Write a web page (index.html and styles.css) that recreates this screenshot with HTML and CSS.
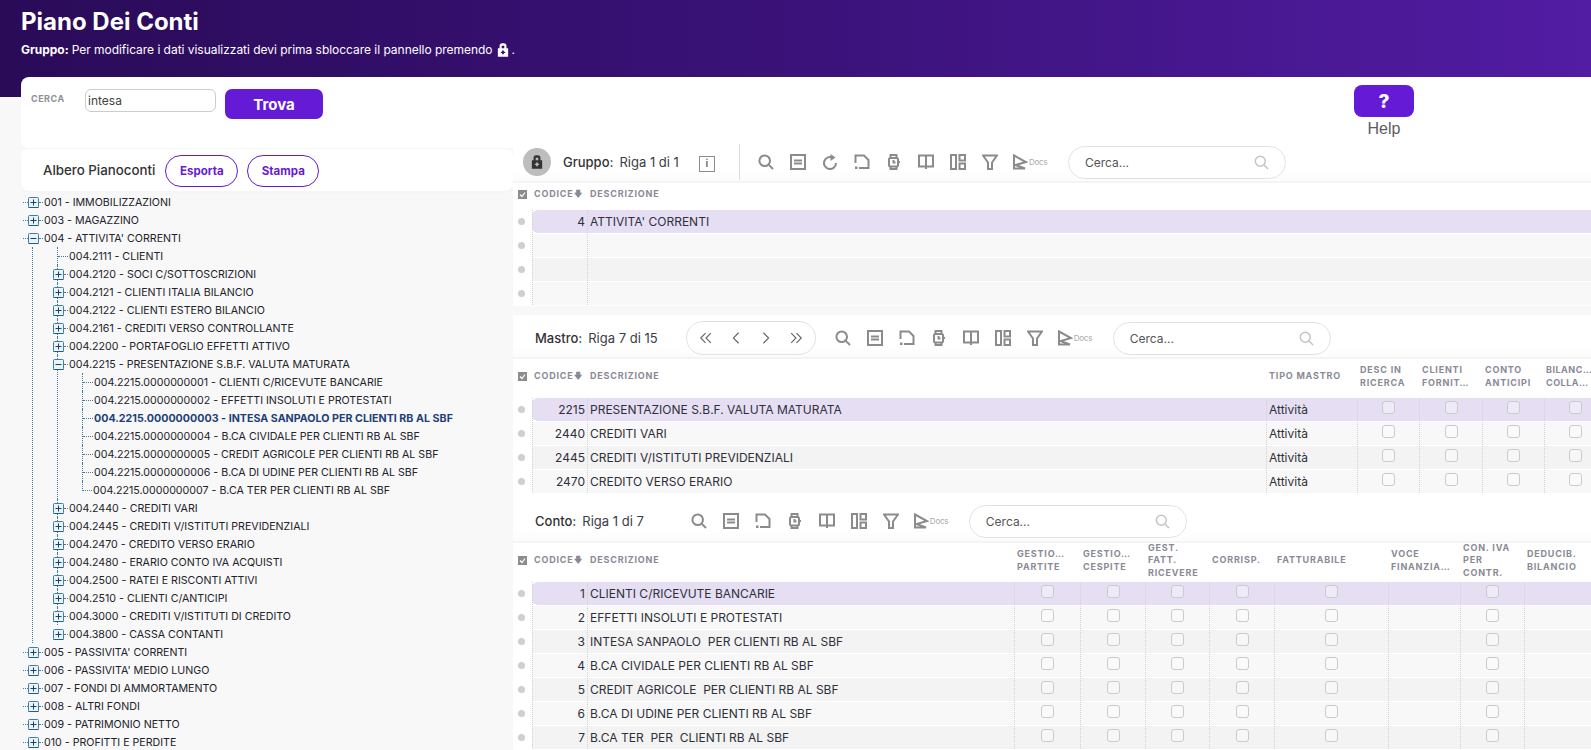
FILE: index.html
```html
<!DOCTYPE html>
<html lang="it">
<head>
<meta charset="utf-8">
<title>Piano Dei Conti</title>
<link rel="stylesheet" href="styles.css">
</head>
<body>
<svg class="defs" aria-hidden="true">
  <symbol id="i-search" viewBox="0 0 16 16"><circle cx="6.7" cy="6.7" r="5.3"/><path d="M10.6 10.6l4.4 4.4"/></symbol>
  <symbol id="i-doc" viewBox="0 0 16 16"><rect x="1" y="1" width="14" height="14"/><path d="M4 6.500h8M4 9.500h8" /></symbol>
  <symbol id="i-refresh" viewBox="0 0 16 16"><path d="M10.500 3.600A6 6 0 1 0 14 9"/><path class="solid" d="M8.500 0v7l5-3.500z"/></symbol>
  <symbol id="i-file" viewBox="0 0 16 16"><path d="M1.500 9V1.500h8.500l4.500 4.500v8H5"/><path class="solid" d="M1 12.500h2.500V15H1z"/></symbol>
  <symbol id="i-watch" viewBox="0 0 16 16"><rect x="3" y="4" width="9" height="8.500" rx="1.500"/><path d="M4.500 4V1h6v3M4.500 12.500V15h6v-2.500M7.500 6v2.500h2M12 8h2"/></symbol>
  <symbol id="i-book" viewBox="0 0 16 16"><path d="M1 1.500h14v11H1zM8 1.500V15"/></symbol>
  <symbol id="i-layout" viewBox="0 0 16 16"><rect x="1" y="1" width="5" height="14"/><rect x="9.500" y="1" width="5.500" height="5.500"/><rect x="9.500" y="9.500" width="5.500" height="5.500"/></symbol>
  <symbol id="i-filter" viewBox="0 0 16 16"><path d="M1 1.500h14L10 8.500V15H6V8.500z"/></symbol>
  <symbol id="i-docs" viewBox="0 0 16 16"><path d="M2 1.500L14 8 3.500 11 13 14.500H2z"/></symbol>
  <symbol id="i-lock" viewBox="0 0 14 16"><path fill-rule="evenodd" d="M3 6V3a3 3 0 0 1 3-3h2a3 3 0 0 1 3 3v3h2v10H1V6zM5.500 6h3V3h-3zM6 8.500v1.500H4.500v1.500H6V13h2v-1.500h1.500V10H8V8.500z"/></symbol>
  <symbol id="i-first" viewBox="0 0 16 16"><path d="M7.500 2.500L2 8l5.500 5.500M13.500 2.500L8 8l5.500 5.500"/></symbol>
  <symbol id="i-prev" viewBox="0 0 16 16"><path d="M11 2L5 8l6 6"/></symbol>
  <symbol id="i-next" viewBox="0 0 16 16"><path d="M5 2l6 6-6 6"/></symbol>
  <symbol id="i-last" viewBox="0 0 16 16"><path d="M2.500 2.500L8 8l-5.500 5.500M8.500 2.500L14 8l-5.500 5.500"/></symbol>
  <symbol id="i-plus" viewBox="0 0 11 11"><rect x=".5" y=".5" width="10" height="10" rx="1" fill="#eaf3f8" stroke="#3b7ea8"/><path d="M.5 10.500h10" stroke="#1f5f8b" fill="none"/><path d="M2.500 5.500h6M5.500 2.500v6" stroke="#1d3f63" fill="none"/></symbol>
  <symbol id="i-minus" viewBox="0 0 11 11"><rect x=".5" y=".5" width="10" height="10" rx="1" fill="#eaf3f8" stroke="#3b7ea8"/><path d="M.5 10.500h10" stroke="#1f5f8b" fill="none"/><path d="M2.500 5.500h6" stroke="#1d3f63" fill="none"/></symbol>
  <symbol id="i-all" viewBox="0 0 9 9"><rect width="9" height="9" fill="#8c8c8c"/><path d="M2 4.500l2 2 3-4" fill="none" stroke="#fff" stroke-width="1.200"/></symbol>
</svg>

<header class="hero">
  <h1 class="hero-title">Piano Dei Conti</h1>
  <p class="hero-note"><b>Gruppo:</b> Per modificare i dati visualizzati devi prima sbloccare il pannello premendo <svg class="note-lock"><use href="#i-lock"/></svg> .</p>
</header>

<section class="search-card">
  <label class="search-label" for="q">CERCA</label>
  <input class="search-input" id="q" type="text" value="intesa">
  <button class="btn-find" type="button">Trova</button>
  <div class="help">
    <button class="btn-help" type="button">?</button>
    <span class="help-text">Help</span>
  </div>
</section>

<main class="main">
  <aside class="left">
    <div class="tree-head">
      <span class="tree-title">Albero Pianoconti</span>
      <button class="pill pill-a" type="button">Esporta</button>
      <button class="pill pill-b" type="button">Stampa</button>
    </div>
    <ul class="tree">
      <li class="n1"><i class="t5"></i><svg class="box"><use href="#i-plus"/></svg><i class="t5"></i><span>001 - IMMOBILIZZAZIONI</span></li>
      <li class="n1"><i class="t5"></i><svg class="box"><use href="#i-plus"/></svg><i class="t5"></i><span>003 - MAGAZZINO</span></li>
      <li class="n1"><i class="t5"></i><svg class="box"><use href="#i-minus"/></svg><i class="t5"></i><span>004 - ATTIVITA' CORRENTI</span></li>
      <li class="branch">
        <ul class="l2">
          <li><div class="n2"><i class="t10"></i><span>004.2111 - CLIENTI</span></div></li>
          <li><div class="n2"><svg class="box box-on"><use href="#i-plus"/></svg><i class="t5"></i><span>004.2120 - SOCI C/SOTTOSCRIZIONI</span></div></li>
          <li><div class="n2"><svg class="box box-on"><use href="#i-plus"/></svg><i class="t5"></i><span>004.2121 - CLIENTI ITALIA BILANCIO</span></div></li>
          <li><div class="n2"><svg class="box box-on"><use href="#i-plus"/></svg><i class="t5"></i><span>004.2122 - CLIENTI ESTERO BILANCIO</span></div></li>
          <li><div class="n2"><svg class="box box-on"><use href="#i-plus"/></svg><i class="t5"></i><span>004.2161 - CREDITI VERSO CONTROLLANTE</span></div></li>
          <li><div class="n2"><svg class="box box-on"><use href="#i-plus"/></svg><i class="t5"></i><span>004.2200 - PORTAFOGLIO EFFETTI ATTIVO</span></div></li>
          <li><div class="n2"><svg class="box box-on"><use href="#i-minus"/></svg><i class="t5"></i><span>004.2215 - PRESENTAZIONE S.B.F. VALUTA MATURATA</span></div>
            <ul class="l3">
              <li class="n3"><i class="t10"></i><span>004.2215.0000000001 - CLIENTI C/RICEVUTE BANCARIE</span></li>
              <li class="n3"><i class="t10"></i><span>004.2215.0000000002 - EFFETTI INSOLUTI E PROTESTATI</span></li>
              <li class="n3 hit"><i class="t10"></i><span>004.2215.0000000003 - INTESA SANPAOLO PER CLIENTI RB AL SBF</span></li>
              <li class="n3"><i class="t10"></i><span>004.2215.0000000004 - B.CA CIVIDALE PER CLIENTI RB AL SBF</span></li>
              <li class="n3"><i class="t10"></i><span>004.2215.0000000005 - CREDIT AGRICOLE PER CLIENTI RB AL SBF</span></li>
              <li class="n3"><i class="t10"></i><span>004.2215.0000000006 - B.CA DI UDINE PER CLIENTI RB AL SBF</span></li>
              <li class="n3 end"><i class="elbow"></i><span>004.2215.0000000007 - B.CA TER PER CLIENTI RB AL SBF</span></li>
            </ul>
          </li>
          <li><div class="n2"><svg class="box box-on"><use href="#i-plus"/></svg><i class="t5"></i><span>004.2440 - CREDITI VARI</span></div></li>
          <li><div class="n2"><svg class="box box-on"><use href="#i-plus"/></svg><i class="t5"></i><span>004.2445 - CREDITI V/ISTITUTI PREVIDENZIALI</span></div></li>
          <li><div class="n2"><svg class="box box-on"><use href="#i-plus"/></svg><i class="t5"></i><span>004.2470 - CREDITO VERSO ERARIO</span></div></li>
          <li><div class="n2"><svg class="box box-on"><use href="#i-plus"/></svg><i class="t5"></i><span>004.2480 - ERARIO CONTO IVA ACQUISTI</span></div></li>
          <li><div class="n2"><svg class="box box-on"><use href="#i-plus"/></svg><i class="t5"></i><span>004.2500 - RATEI E RISCONTI ATTIVI</span></div></li>
          <li><div class="n2"><svg class="box box-on"><use href="#i-plus"/></svg><i class="t5"></i><span>004.2510 - CLIENTI C/ANTICIPI</span></div></li>
          <li><div class="n2"><svg class="box box-on"><use href="#i-plus"/></svg><i class="t5"></i><span>004.3000 - CREDITI V/ISTITUTI DI CREDITO</span></div></li>
          <li class="l2-end"><div class="n2"><svg class="box box-on"><use href="#i-plus"/></svg><i class="t5"></i><span>004.3800 - CASSA CONTANTI</span></div></li>
        </ul>
      </li>
      <li class="n1"><i class="t5"></i><svg class="box"><use href="#i-plus"/></svg><i class="t5"></i><span>005 - PASSIVITA' CORRENTI</span></li>
      <li class="n1"><i class="t5"></i><svg class="box"><use href="#i-plus"/></svg><i class="t5"></i><span>006 - PASSIVITA' MEDIO LUNGO</span></li>
      <li class="n1"><i class="t5"></i><svg class="box"><use href="#i-plus"/></svg><i class="t5"></i><span>007 - FONDI DI AMMORTAMENTO</span></li>
      <li class="n1"><i class="t5"></i><svg class="box"><use href="#i-plus"/></svg><i class="t5"></i><span>008 - ALTRI FONDI</span></li>
      <li class="n1"><i class="t5"></i><svg class="box"><use href="#i-plus"/></svg><i class="t5"></i><span>009 - PATRIMONIO NETTO</span></li>
      <li class="n1"><i class="t5"></i><svg class="box"><use href="#i-plus"/></svg><i class="t5"></i><span>010 - PROFITTI E PERDITE</span></li>
    </ul>
  </aside>

  <div class="right">
    <!-- GRUPPO -->
    <section class="panel panel-gruppo">
      <div class="bar bar-gruppo">
        <span class="lock-round"><svg class="lock-icon"><use href="#i-lock"/></svg></span>
        <b class="bar-name">Gruppo:</b><span class="bar-pos">Riga 1 di 1</span>
        <span class="info">i</span>
        <span class="bar-sep"></span>
        <div class="tools">
          <svg class="ico"><use href="#i-search"/></svg>
          <svg class="ico"><use href="#i-doc"/></svg>
          <svg class="ico"><use href="#i-refresh"/></svg>
          <svg class="ico"><use href="#i-file"/></svg>
          <svg class="ico"><use href="#i-watch"/></svg>
          <svg class="ico"><use href="#i-book"/></svg>
          <svg class="ico"><use href="#i-layout"/></svg>
          <svg class="ico"><use href="#i-filter"/></svg>
          <span class="docs"><svg class="ico"><use href="#i-docs"/></svg><small>Docs</small></span>
        </div>
        <div class="find"><span>Cerca...</span><svg class="ico ico-find"><use href="#i-search"/></svg></div>
      </div>
      <div class="grid grid-gruppo">
        <div class="row head head-short"><span class="mark"><svg class="all"><use href="#i-all"/></svg></span><div class="cells"><div class="h">CODICE<em>🡇</em></div><div class="h">DESCRIZIONE</div></div></div>
        <div class="row"><span class="mark"><i></i></span><div class="cells on"><div class="c num">4</div><div class="c">ATTIVITA' CORRENTI</div></div></div>
        <div class="row"><span class="mark"><i></i></span><div class="cells"><div class="c num"></div><div class="c"></div></div></div>
        <div class="row alt"><span class="mark"><i></i></span><div class="cells"><div class="c num"></div><div class="c"></div></div></div>
        <div class="row"><span class="mark"><i></i></span><div class="cells"><div class="c num"></div><div class="c"></div></div></div>
      </div>
    </section>

    <!-- MASTRO -->
    <section class="panel panel-mastro">
      <div class="bar bar-mastro">
        <b class="bar-name">Mastro:</b><span class="bar-pos">Riga 7 di 15</span>
        <div class="pager">
          <svg class="nav"><use href="#i-first"/></svg>
          <svg class="nav"><use href="#i-prev"/></svg>
          <svg class="nav"><use href="#i-next"/></svg>
          <svg class="nav"><use href="#i-last"/></svg>
        </div>
        <div class="tools">
          <svg class="ico"><use href="#i-search"/></svg>
          <svg class="ico"><use href="#i-doc"/></svg>
          <svg class="ico"><use href="#i-file"/></svg>
          <svg class="ico"><use href="#i-watch"/></svg>
          <svg class="ico"><use href="#i-book"/></svg>
          <svg class="ico"><use href="#i-layout"/></svg>
          <svg class="ico"><use href="#i-filter"/></svg>
          <span class="docs"><svg class="ico"><use href="#i-docs"/></svg><small>Docs</small></span>
        </div>
        <div class="find"><span>Cerca...</span><svg class="ico ico-find"><use href="#i-search"/></svg></div>
      </div>
      <div class="grid grid-mastro">
        <div class="row head"><span class="mark"><svg class="all"><use href="#i-all"/></svg></span><div class="cells"><div class="h">CODICE<em>🡇</em></div><div class="h">DESCRIZIONE</div><div class="h">TIPO MASTRO</div><div class="h">DESC IN RICERCA</div><div class="h">CLIENTI<br>FORNIT…</div><div class="h">CONTO<br>ANTICIPI</div><div class="h">BILANC…<br>COLLA…</div></div></div>
        <div class="row"><span class="mark"><i></i></span><div class="cells on"><div class="c num">2215</div><div class="c">PRESENTAZIONE S.B.F. VALUTA MATURATA</div><div class="c">Attività</div><div class="c ck"><i></i></div><div class="c ck"><i></i></div><div class="c ck"><i></i></div><div class="c ck"><i></i></div></div></div>
        <div class="row"><span class="mark"><i></i></span><div class="cells"><div class="c num">2440</div><div class="c">CREDITI VARI</div><div class="c">Attività</div><div class="c ck"><i></i></div><div class="c ck"><i></i></div><div class="c ck"><i></i></div><div class="c ck"><i></i></div></div></div>
        <div class="row alt"><span class="mark"><i></i></span><div class="cells"><div class="c num">2445</div><div class="c">CREDITI V/ISTITUTI PREVIDENZIALI</div><div class="c">Attività</div><div class="c ck"><i></i></div><div class="c ck"><i></i></div><div class="c ck"><i></i></div><div class="c ck"><i></i></div></div></div>
        <div class="row"><span class="mark"><i></i></span><div class="cells"><div class="c num">2470</div><div class="c">CREDITO VERSO ERARIO</div><div class="c">Attività</div><div class="c ck"><i></i></div><div class="c ck"><i></i></div><div class="c ck"><i></i></div><div class="c ck"><i></i></div></div></div>
      </div>
    </section>

    <!-- CONTO -->
    <section class="panel">
      <div class="bar bar-conto">
        <b class="bar-name">Conto:</b><span class="bar-pos">Riga 1 di 7</span>
        <div class="tools">
          <svg class="ico"><use href="#i-search"/></svg>
          <svg class="ico"><use href="#i-doc"/></svg>
          <svg class="ico"><use href="#i-file"/></svg>
          <svg class="ico"><use href="#i-watch"/></svg>
          <svg class="ico"><use href="#i-book"/></svg>
          <svg class="ico"><use href="#i-layout"/></svg>
          <svg class="ico"><use href="#i-filter"/></svg>
          <span class="docs"><svg class="ico"><use href="#i-docs"/></svg><small>Docs</small></span>
        </div>
        <div class="find"><span>Cerca...</span><svg class="ico ico-find"><use href="#i-search"/></svg></div>
      </div>
      <div class="grid grid-conto">
        <div class="row head"><span class="mark"><svg class="all"><use href="#i-all"/></svg></span><div class="cells"><div class="h">CODICE<em>🡇</em></div><div class="h">DESCRIZIONE</div><div class="h">GESTIO…<br>PARTITE</div><div class="h">GESTIO…<br>CESPITE</div><div class="h">GEST.<br>FATT.<br>RICEVERE</div><div class="h">CORRISP.</div><div class="h">FATTURABILE</div><div class="h">VOCE<br>FINANZIA…</div><div class="h">CON. IVA<br>PER<br>CONTR.</div><div class="h">DEDUCIB.<br>BILANCIO</div></div></div>
        <div class="row"><span class="mark"><i></i></span><div class="cells on"><div class="c num">1</div><div class="c">CLIENTI C/RICEVUTE BANCARIE</div><div class="c ck"><i></i></div><div class="c ck"><i></i></div><div class="c ck"><i></i></div><div class="c ck"><i></i></div><div class="c ck"><i></i></div><div class="c"></div><div class="c ck"><i></i></div><div class="c"></div></div></div>
        <div class="row"><span class="mark"><i></i></span><div class="cells"><div class="c num">2</div><div class="c">EFFETTI INSOLUTI E PROTESTATI</div><div class="c ck"><i></i></div><div class="c ck"><i></i></div><div class="c ck"><i></i></div><div class="c ck"><i></i></div><div class="c ck"><i></i></div><div class="c"></div><div class="c ck"><i></i></div><div class="c"></div></div></div>
        <div class="row alt"><span class="mark"><i></i></span><div class="cells"><div class="c num">3</div><div class="c">INTESA SANPAOLO&nbsp; PER CLIENTI RB AL SBF</div><div class="c ck"><i></i></div><div class="c ck"><i></i></div><div class="c ck"><i></i></div><div class="c ck"><i></i></div><div class="c ck"><i></i></div><div class="c"></div><div class="c ck"><i></i></div><div class="c"></div></div></div>
        <div class="row"><span class="mark"><i></i></span><div class="cells"><div class="c num">4</div><div class="c">B.CA CIVIDALE PER CLIENTI RB AL SBF</div><div class="c ck"><i></i></div><div class="c ck"><i></i></div><div class="c ck"><i></i></div><div class="c ck"><i></i></div><div class="c ck"><i></i></div><div class="c"></div><div class="c ck"><i></i></div><div class="c"></div></div></div>
        <div class="row alt"><span class="mark"><i></i></span><div class="cells"><div class="c num">5</div><div class="c">CREDIT AGRICOLE&nbsp; PER CLIENTI RB AL SBF</div><div class="c ck"><i></i></div><div class="c ck"><i></i></div><div class="c ck"><i></i></div><div class="c ck"><i></i></div><div class="c ck"><i></i></div><div class="c"></div><div class="c ck"><i></i></div><div class="c"></div></div></div>
        <div class="row"><span class="mark"><i></i></span><div class="cells"><div class="c num">6</div><div class="c">B.CA DI UDINE PER CLIENTI RB AL SBF</div><div class="c ck"><i></i></div><div class="c ck"><i></i></div><div class="c ck"><i></i></div><div class="c ck"><i></i></div><div class="c ck"><i></i></div><div class="c"></div><div class="c ck"><i></i></div><div class="c"></div></div></div>
        <div class="row alt"><span class="mark"><i></i></span><div class="cells"><div class="c num">7</div><div class="c">B.CA TER&nbsp; PER&nbsp; CLIENTI RB AL SBF</div><div class="c ck"><i></i></div><div class="c ck"><i></i></div><div class="c ck"><i></i></div><div class="c ck"><i></i></div><div class="c ck"><i></i></div><div class="c"></div><div class="c ck"><i></i></div><div class="c"></div></div></div>
      </div>
    </section>
  </div>
</main>
</body>
</html>
```

FILE: styles.css
```css
* { box-sizing: border-box; }
html, body { margin: 0; height: 750px; overflow: hidden; }
body { background: #f8f8f8; font-family: Inter, "Noto Sans", sans-serif; color: #2b2b33; }
.defs { display: none; }
ul { list-style: none; margin: 0; padding: 0; }
i, em { font-style: normal; }

/* hero */
.hero { height: 97px; padding: 7px 21px 0; color: #fff;
  background: linear-gradient(90deg, #2a0b58 0%, #3a1279 50%, #521ca3 100%); }
.hero-title { margin: 0; font-size: 24px; line-height: 30px; font-weight: 700; }
.hero-note { margin: 5px 0 0; font-size: 12px; letter-spacing: -.03px; line-height: 16px; display: flex; align-items: center; gap: 3px; }
.note-lock { width: 12px; height: 14px; fill: #fff; margin-left: 1px; }

/* search card */
.search-card { height: 71px; margin: -20px 0 0 21px; background: #fff; border-radius: 8px 0 0 8px;
  display: flex; align-items: flex-start; }
.search-label { margin: 16px 0 0 10px; width: 54px; font-size: 9px; line-height: 11px; font-weight: 700; letter-spacing: .5px; color: #8f8f96; }
.search-input { width: 131px; height: 23px; margin-top: 12px; padding: 0 2px; border: 1px solid #ccc; border-radius: 6px;
  font: 12px Inter, sans-serif; color: #444; background: #fff; }
.btn-find { width: 98px; height: 30px; margin: 12px 0 0 9px; border: 0; border-radius: 7px; background: #651bd6; color: #fff;
  font: 700 15px Inter, sans-serif; }
.help { margin: 8px 0 0 1031px; width: 60px; display: flex; flex-direction: column; align-items: center; }
.btn-help { width: 60px; height: 32px; border: 0; border-radius: 8px; background: #651bd6; color: #fff; font: 800 19px Inter, sans-serif; }
.help-text { margin-top: 3px; font: 16px/18px "Liberation Sans", Arial, sans-serif; color: #5b5b63; }

/* main layout */
.main { display: flex; align-items: flex-start; }
.left { width: 513px; padding: 1px 0 0 21px; flex: none; }
.right { flex: 1; min-width: 0; margin-top: -5px; height: 612px; overflow: hidden; position: relative; }

/* tree */
.tree-head { height: 42px; background: #fff; border-radius: 8px; display: flex; align-items: center; padding-left: 22px; box-shadow: 0 2px 4px rgba(0,0,0,.02); }
.tree-title { font-size: 13.3px; font-weight: 500; color: #333; }
.pill { height: 32px; margin-top: 2px; border: 1.5px solid #651bd6; border-radius: 16px; background: #fff; color: #651bd6; font: 700 11.5px Inter, sans-serif; padding: 0; }
.pill-a { width: 73px; margin-left: 10px; }
.pill-b { width: 72px; margin-left: 9px; }
.tree { padding: 2px 0 0 2px; font-size: 10.65px; color: #22222a; }
.n1, .n2, .n3 { height: 18px; display: flex; align-items: center; white-space: nowrap; }
.n1 > span, .n2 > span, .n3 > span { margin-left: 1px; }
.t5 { width: 5px; border-top: 1px dotted #3b7ea8; flex: none; }
.box + .t5 { width: 4px; }
.t10 { width: 10px; border-top: 1px dotted #3b7ea8; flex: none; }
.elbow { width: 10px; height: 10px; align-self: flex-start; margin-left: 0; border-left: 1px dotted #3b7ea8; border-bottom: 1px dotted #3b7ea8; flex: none; }
.box { width: 11px; height: 11px; flex: none; }
.box-on { margin-left: -5px; }
.branch { margin-left: 9px; padding-left: 24px; border-left: 1px dotted #3b7ea8; }
.l2 > li { border-left: 1px dotted #3b7ea8; }
.l2 > li.l2-end { border-left-color: transparent; }
.l3 { margin-left: 24px; }
.n3 { border-left: 1px dotted #3b7ea8; }
.n3.end { border-left: 0; }
.hit { font-weight: 700; color: #1d3f78; letter-spacing: .03px; }

/* panels */
.panel { background: #fff; }
.panel-gruppo { margin-bottom: 9px; }
.panel-mastro { padding-bottom: 3px; }
.bar { display: flex; align-items: center; background: linear-gradient(#fff 70%, #fcfcfc); border-radius: 8px 0 0 0; border-bottom: 2px solid #f4f4f4; }
.bar-gruppo { height: 40px; padding-left: 10px; }
.bar-mastro { height: 44px; padding: 4px 0 0 22px; }
.bar-conto { height: 46px; padding: 4px 0 0 22px; }
.bar-name { font-size: 13px; font-weight: 500; color: #333; }
.bar-pos { margin-left: 6px; font-size: 13px; color: #3c3c44; }
.lock-round { width: 28px; height: 28px; border-radius: 50%; background: #bdbdbd; display: flex; align-items: center; justify-content: center; margin-right: 12px; }
.lock-icon { width: 12px; height: 14px; fill: #333; }
.info { width: 16px; height: 16px; margin: 4px 0 0 20px; border: 1.5px solid #8c8c8c; font-size: 10px; line-height: 13px; text-align: center; color: #777; font-weight: 700; }
.bar-sep { width: 1px; height: 36px; margin-left: 24px; background: #ddd; }
.tools { display: flex; align-items: center; gap: 16px; }
.bar-gruppo .tools { margin-left: 18px; }
.bar-conto .tools { margin-left: 47px; }
.ico { width: 16px; height: 16px; flex: none; fill: none; stroke: #8b8b8b; stroke-width: 2; }
.solid { fill: #8b8b8b; stroke: none; }
.docs { display: flex; align-items: center; margin-left: -2px; gap: 1px; }
.docs small { font-size: 8px; color: #aaa; width: 19px; letter-spacing: -.2px; }
.find { width: 218px; height: 33px; margin-left: 20px; padding: 0 16px 0 16px; border: 1px solid #e2e2e2; border-radius: 17px; background: #fff;
  display: flex; align-items: center; justify-content: space-between; font-size: 12px; color: #555; }
.ico-find { stroke: #c4c4c4; width: 15px; height: 15px; stroke-width: 1.600; }
.pager { width: 130px; height: 34px; margin: 0 19px 0 28px; border: 1px solid #e2e2e2; border-radius: 17px; display: flex; align-items: center; justify-content: space-around; padding: 0 4px; }
.nav { width: 14px; height: 14px; fill: none; stroke: #666; stroke-width: 1.300; }

/* grids */
.row { display: flex; height: 24px; padding-bottom: 1px; }
.mark { width: 19px; flex: none; display: flex; align-items: center; padding-left: 5px; }
.mark i { width: 7px; height: 7px; border-radius: 50%; background: #cfcfcf; }
.all { width: 9px; height: 9px; flex: none; }
.cells { flex: 1; display: grid; min-width: 0; background: #f8f8f8; font-size: 12px; line-height: 23px; color: #2f2f3a; }
.alt .cells { background: #f3f3f3; }
.cells.on { background: #e6dff4; border-radius: 6px 0 0 6px; }
.grid-gruppo .cells { grid-template-columns: 55px 1fr; }
.grid-mastro .cells { grid-template-columns: 55px 679px 91px 62px 63px 62px 62px; }
.grid-conto .cells { grid-template-columns: 55px 427px 66px 65px 64px 65px 114px 72px 64px 1fr; }
.c { border-left: 1px dotted #d2d2d2; white-space: nowrap; overflow: hidden; padding-left: 2px; }
.c.num { text-align: right; padding-right: 2px; }
.ck { display: flex; justify-content: center; padding: 3px 0 0; }
.ck i { width: 13px; height: 13px; border: 1px solid #cbcbcb; border-radius: 3px; background: rgba(255,255,255,.35); }

.head { height: 39px; padding: 0 0 4px; }
.head-short { height: 27px; padding-bottom: 4px; }
.head .cells { background: #fff; align-items: center; line-height: 12px; font-size: 9px; }
.h { font-size: 9px; font-weight: 700; letter-spacing: .8px; color: #8a8a96; padding-left: 3px; line-height: 12.500px; white-space: normal; overflow: hidden; }
.grid-mastro .h:last-child { padding-left: 2px; letter-spacing: .5px; }
.h em { font-size: 8px; letter-spacing: 0; margin-left: 0; }
.h:first-child { padding-left: 2px; margin-right: -6px; white-space: nowrap; overflow: visible; }
```
